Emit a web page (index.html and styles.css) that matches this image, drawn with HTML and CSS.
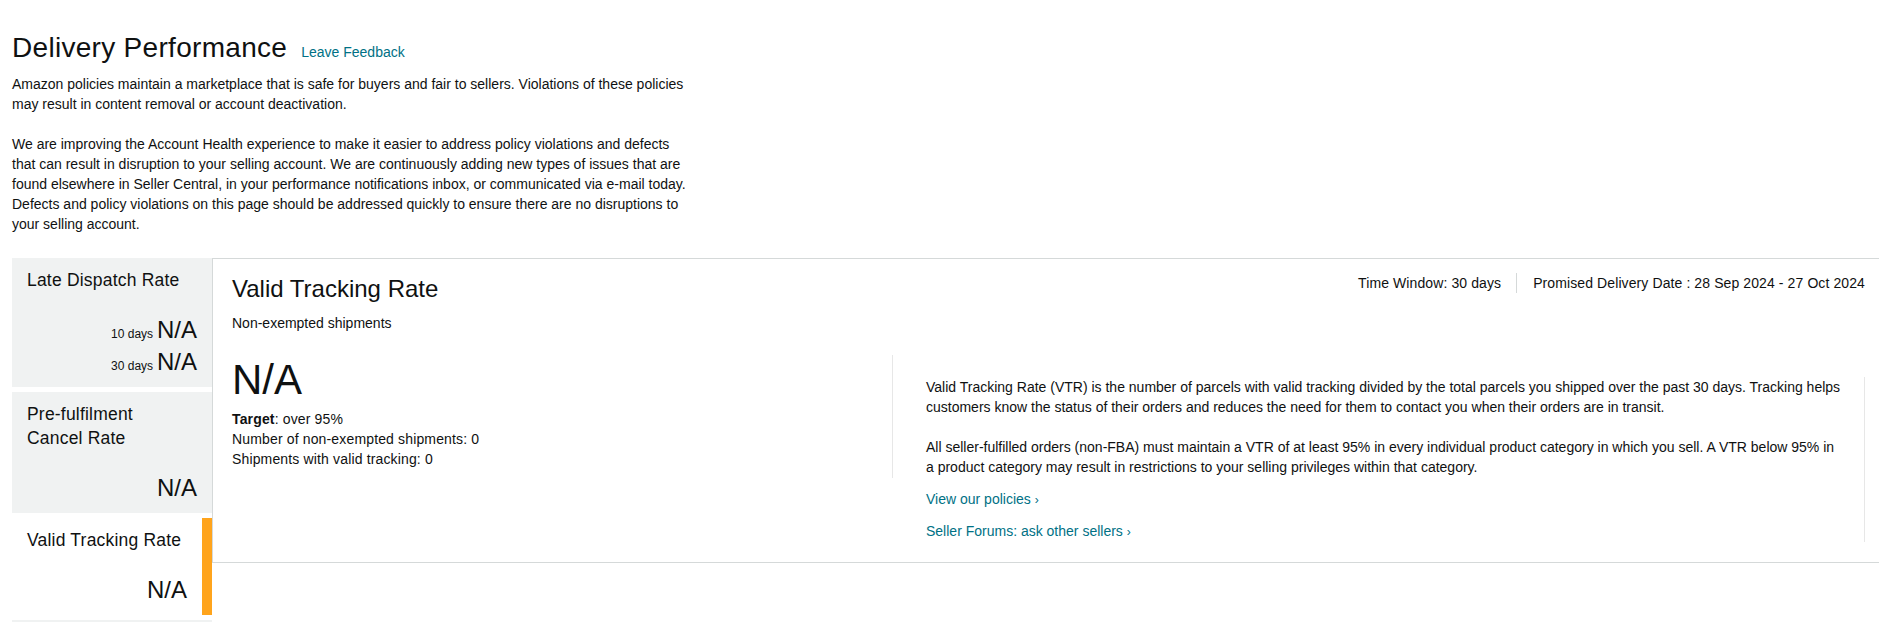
FILE: index.html
```html
<!DOCTYPE html>
<html lang="en">
<head>
  <meta charset="UTF-8" />
  <meta name="viewport" content="width=device-width, initial-scale=1.0" />
  <title>Delivery Performance</title>
  <link rel="stylesheet" href="styles.css">
</head>
<body>
  <div class="page">
    <!-- Page heading -->
    <div class="page-header">
      <h1>Delivery Performance</h1>
      <a href="#" class="link">Leave Feedback</a>
    </div>

    <div class="intro">
      <p>Amazon policies maintain a marketplace that is safe for buyers and fair to sellers. Violations of these policies<br>
        may result in content removal or account deactivation.</p>
      <p>We are improving the Account Health experience to make it easier to address policy violations and defects<br>
        that can result in disruption to your selling account. We are continuously adding new types of issues that are<br>
        found elsewhere in Seller Central, in your performance notifications inbox, or communicated via e-mail today.<br>
        Defects and policy violations on this page should be addressed quickly to ensure there are no disruptions to<br>
        your selling account.</p>
    </div>

    <div class="metrics">
      <!-- Metric tabs -->
      <div class="tabs">
        <div class="tab">
          <div class="tab-title">Late Dispatch Rate</div>
          <div class="tab-values">
            <div><span class="days">10 days</span> <span class="value">N/A</span></div>
            <div><span class="days">30 days</span> <span class="value">N/A</span></div>
          </div>
        </div>
        <div class="tab">
          <div class="tab-title">Pre-fulfilment<br>Cancel Rate</div>
          <div class="tab-values">
            <div><span class="value">N/A</span></div>
          </div>
        </div>
        <div class="tab active">
          <div class="tab-title">Valid Tracking Rate</div>
          <div class="tab-values">
            <div><span class="value">N/A</span></div>
          </div>
        </div>
        <!-- next tab, below the fold -->
        <div class="tab tab-next"></div>
      </div>

      <!-- Selected metric details -->
      <div class="panel">
        <div class="panel-header">
          <h2>Valid Tracking Rate</h2>
          <div class="window">
            <span>Time Window: 30 days</span>
            <span class="dates">Promised Delivery Date : 28 Sep 2024 - 27 Oct 2024</span>
          </div>
        </div>
        <div class="subtitle">Non-exempted shipments</div>

        <div class="panel-body">
          <div class="stats">
            <div class="big-value">N/A</div>
            <div class="stat-lines">
              <div><b>Target</b>: over 95%</div>
              <div>Number of non-exempted shipments: 0</div>
              <div>Shipments with valid tracking: 0</div>
            </div>
          </div>
          <div class="about">
            <div class="about-inner">
              <p>Valid Tracking Rate (VTR) is the number of parcels with valid tracking divided by the total parcels you shipped over the past 30 days. Tracking helps customers know the status of their orders and reduces the need for them to contact you when their orders are in transit.</p>
              <p>All seller-fulfilled orders (non-FBA) must maintain a VTR of at least 95% in every individual product category in which you sell. A VTR below 95% in a product category may result in restrictions to your selling privileges within that category.</p>
              <a href="#" class="link more">View our policies <span class="chev">›</span></a>
              <a href="#" class="link more">Seller Forums: ask other sellers <span class="chev">›</span></a>
            </div>
          </div>
        </div>
      </div>
    </div>
  </div>
</body>
</html>
```

FILE: styles.css
```css
/* Basic page styling */
body {
  font-family: "Liberation Sans", Arial, sans-serif;
  font-size: 14px;
  line-height: 20px;
  color: #0f1111;
  background: #fff;
  margin: 0;
  padding: 0;
  overflow: hidden;
}
.page {
  padding: 32px 0 0 12px;
}
.page-header {
  display: flex;
  align-items: baseline;
  gap: 14px;
  margin-bottom: 10px;
}
h1 {
  font-size: 28px;
  line-height: 32px;
  font-weight: 400;
  letter-spacing: 0.3px;
  margin: 0;
}
.link {
  color: #007185;
  text-decoration: none;
}
.intro {
  width: 730px;
}
.intro p {
  margin: 0 0 20px;
}
.intro p:last-child {
  margin-bottom: 0;
}

/* Metrics area */
.metrics {
  display: flex;
  align-items: flex-start;
  margin-top: 24px;
}
.tabs {
  width: 200px;
  flex-shrink: 0;
}
.tab {
  background: #f0f2f2;
  padding: 10px 15px 9px 15px;
  margin-bottom: 5px;
}
.tab.active {
  background: #fff;
  border-right: 10px solid #ffa41c;
}
.tab-next {
  height: 60px;
}
.tab-title {
  font-size: 17.5px;
  line-height: 24px;
  letter-spacing: 0.2px;
}
.tab-values {
  margin-top: 22px;
  text-align: right;
}
.days {
  font-size: 12px;
}
.value {
  font-size: 24px;
  line-height: 32px;
}

.panel {
  flex: 1;
  border-top: 1px solid #d5d9d9;
  border-left: 1px solid #d5d9d9;
  border-bottom: 1px solid #d5d9d9;
  padding: 14px 14px 20px 19px;
}
.panel-header {
  display: flex;
  justify-content: space-between;
  align-items: flex-start;
}
h2 {
  font-size: 24px;
  line-height: 32px;
  font-weight: 400;
  margin: 0;
}
.window {
  display: flex;
  letter-spacing: 0.1px;
}
.dates {
  border-left: 1px solid #d5d9d9;
  margin-left: 15px;
  padding-left: 16px;
}
.subtitle {
  margin-top: 8px;
}
.panel-body {
  display: flex;
  align-items: flex-start;
  margin-top: 22px;
}
.stats {
  width: 660px;
  flex-shrink: 0;
  border-right: 1px solid #e7e7e7;
  padding-bottom: 9px;
}
.big-value {
  font-size: 42px;
  line-height: 50px;
}
.stat-lines {
  margin-top: 4px;
  letter-spacing: 0.15px;
}
.about {
  flex: 1;
  padding: 22px 0 0 33px;
}
.about-inner {
  border-right: 1px solid #e7e7e7;
  padding-right: 22px;
}
.about-inner p {
  margin: 0 0 20px;
}
.more {
  display: block;
  margin-top: 11px;
}
.about-inner p + .more {
  margin-top: -8px;
}
.chev {
  font-size: 12px;
}
```
